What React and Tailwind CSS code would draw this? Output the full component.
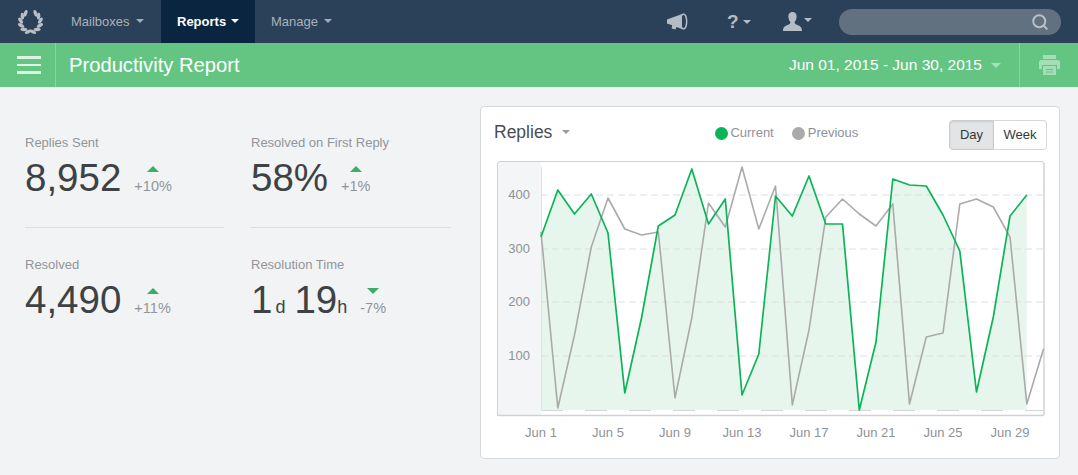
import { Search } from "lucide-react";

const green = [237, 190, 214, 194, 233, 393, 318, 226, 215, 169, 224, 199, 395, 354, 196, 216, 176, 224, 224, 410, 342, 179, 185, 186, 215, 251, 392, 317, 216, 195];
const gray = [232, 408, 335, 247, 198, 229, 235, 232, 398, 318, 203, 227, 167, 229, 186, 405, 330, 217, 199, 214, 226, 204, 404, 337, 333, 204, 199, 207, 237, 404, 349];

const ticks = [
  { label: "400", y: 195 },
  { label: "300", y: 249 },
  { label: "200", y: 302 },
  { label: "100", y: 356 },
];
const days = ["Jun 1", "Jun 5", "Jun 9", "Jun 13", "Jun 17", "Jun 21", "Jun 25", "Jun 29"];

// chart svg starts at page x=497, y=161
const px = (i) => 541 - 497 + i * 16.75;
const py = (y) => y - 161;
const line = (list) => list.map((y, i) => `${px(i).toFixed(1)},${py(y)}`).join(" ");

function Caret({ className }) {
  return <span className={`inline-block w-0 h-0 border-x-[4px] border-x-transparent border-t-[4px] ${className}`} />;
}

function Laurel() {
  // angle from straight down, going up each side
  const angles = [14, 42, 70, 98, 126, 150];
  const leaf = (a, side, i) => (
    <g key={`${side}${i}`} transform={`scale(${side} 1) rotate(${a}) translate(0 10) rotate(${-40})`}>
      <ellipse cx="0" cy="0" rx="3.5" ry="1.7" fill="#b8bfc7" />
    </g>
  );
  return (
    <svg width="27" height="24" viewBox="-13.5 -12 27 24">
      {angles.map((a, i) => leaf(a, 1, i))}
      {angles.map((a, i) => leaf(a, -1, i))}
    </svg>
  );
}

function Megaphone() {
  return (
    <svg width="21" height="18" viewBox="0 0 21 18">
      <path d="M0 6.5 L15 1 L15 16 L9.3 14 L8.6 16.6 L4.6 15.4 L5.2 12.2 L0 10.4Z" fill="#b4bcc5" />
      <ellipse cx="16.5" cy="8.5" rx="3.2" ry="7.6" fill="none" stroke="#b4bcc5" strokeWidth="1.5" />
    </svg>
  );
}

function UserIcon() {
  return (
    <svg width="19" height="19" viewBox="0 0 19 19" fill="#b4bcc5">
      <path d="M9.5 0 C12.5 0 13.8 2.2 13.6 5 C13.4 7.5 12.4 9.2 11.6 10.2 C11.4 11.5 12.5 12.2 14.5 13 C17 14 19 15 19 19 L0 19 C0 15 2 14 4.5 13 C6.5 12.2 7.6 11.5 7.4 10.2 C6.6 9.2 5.6 7.5 5.4 5 C5.2 2.2 6.5 0 9.5 0Z" />
    </svg>
  );
}

function PrinterIcon() {
  return (
    <svg width="21" height="20" viewBox="0 0 21 20" fill="#a3deb7">
      <path d="M4 0 H17 V4 H4Z" />
      <path d="M2 5 H19 C20 5 21 6 21 7 V14 H18 V10 H3 V14 H0 V7 C0 6 1 5 2 5Z" />
      <path fillRule="evenodd" d="M4 11 H17 V20 H4Z M7 14 V15 H14 V14Z M7 16.5 V17.5 H14 V16.5Z" />
    </svg>
  );
}

function Stat({ label, delta, down, children }) {
  return (
    <div className="h-[94px]">
      <div className="text-[13px] leading-[18px] pt-[1px] text-[#919599]">{label}</div>
      <div className="flex items-start mt-[4px]">
        <div className="text-[38.5px] leading-[44px] text-[#3d4245] whitespace-nowrap">{children}</div>
        <div className="ml-[13px] mt-[10px] flex flex-col items-center">
          {down ? (
            <span className="w-0 h-0 mb-[1px] border-x-[6px] border-x-transparent border-t-[6px] border-t-[#3aad68]" />
          ) : (
            <span className="w-0 h-0 mb-[1px] border-x-[6px] border-x-transparent border-b-[6px] border-b-[#3aad68]" />
          )}
          <span className="text-[14.5px] leading-[20px] mt-[3px] text-[#919599]">{delta}</span>
        </div>
      </div>
    </div>
  );
}

function Chart() {
  return (
    <svg width="548" height="292" viewBox="0 0 548 292" className="block" style={{ fontFamily: '"Liberation Sans", sans-serif' }}>
      <rect x="0.5" y="0.5" width="547" height="254" rx="2" fill="#fff" />
      <rect x="1" y="1" width="43" height="253" fill="#f4f5f7" />
      <polygon points={`${px(0)},249 ${line(green)} ${px(29)},249`} fill="#e6f6ed" />
      {ticks.map((t) => (
        <g key={t.label}>
          <line x1="44" x2="547" y1={py(t.y)} y2={py(t.y)} stroke="#dcdedd" strokeWidth="1" strokeDasharray="7 4" />
          <text x="33" y={py(t.y) + 4} textAnchor="end" fontSize="13" fill="#8f9295">{t.label}</text>
        </g>
      ))}
      <line x1="44" x2="547" y1="249.5" y2="249.5" stroke="#d6d8d8" strokeDasharray="22 22" />
      <line x1="44.5" x2="44.5" y1="6" y2="249" stroke="#dfe1e2" />
      <path d="M0.5 254 V2.5 Q0.5 0.5 2.5 0.5 H545 Q547 0.5 547 2.5" fill="none" stroke="#cfd1d2" />
      <path d="M0.5 254 Q0.5 254.5 2.5 254.5 H545 Q547 254.5 547 252.5 V2" fill="none" stroke="#cfd1d2" strokeWidth="1.4" />
      <polyline points={line(gray)} fill="none" stroke="#aaaaaa" strokeWidth="1.6" strokeLinejoin="round" />
      <polyline points={line(green)} fill="none" stroke="#0cb458" strokeWidth="1.7" strokeLinejoin="round" />
      {days.map((d, i) => (
        <text key={d} x={px(i * 4)} y="276" textAnchor="middle" fontSize="13" fill="#8f9295">{d}</text>
      ))}
    </svg>
  );
}

export default function App() {
  return (
    <div className="w-[1078px] h-[475px] overflow-hidden bg-[#f1f3f5] font-['Liberation_Sans',sans-serif]">
      {/* top nav */}
      <div className="h-[43px] bg-[#2b4059] flex items-center text-[13px] text-[#a9b3bd]">
        <div className="w-[55px] pl-[17px] pt-[1px] flex items-center"><Laurel /></div>
        <div className="flex items-center gap-[6px] pl-[16px] pr-[15px] w-[106px] h-full">Mailboxes <Caret className="border-t-[#a3adb8] mb-[2px]" /></div>
        <div className="flex items-center gap-[5px] pl-[16px] w-[94px] h-full bg-[#0a2540] text-white font-bold">Reports <Caret className="border-t-white mb-[2px]" /></div>
        <div className="flex items-center gap-[6px] pl-[16px] h-full">Manage <Caret className="border-t-[#a3adb8] mb-[2px]" /></div>
        <div className="ml-auto flex items-center"><Megaphone /></div>
        <div className="ml-[39px] flex items-center gap-[4px] text-[#b4bcc5] text-[19px] font-bold leading-none w-[26px]">? <Caret className="border-t-[#b4bcc5]" /></div>
        <div className="ml-[30px] flex items-center gap-[2px]"><UserIcon /><Caret className="border-t-[#b4bcc5] mb-[3px]" /></div>
        <div className="ml-[27px] mr-[17px] w-[222px] h-[26px] rounded-full bg-[#62717f] flex items-center justify-end pr-[12px]">
          <Search size={18} strokeWidth={2.6} className="text-[#b9c0c7]" />
        </div>
      </div>

      {/* green bar */}
      <div className="h-[44px] bg-[#64c583] flex items-center text-white">
        <div className="w-[56px] h-full border-r border-[#8bd4a2] flex flex-col justify-center gap-[5px] pl-[17px]">
          <span className="block w-[24px] h-[3px] bg-[#ddf3e4]" />
          <span className="block w-[24px] h-[2px] bg-[#ddf3e4]" />
          <span className="block w-[24px] h-[3px] bg-[#ddf3e4]" />
        </div>
        <div className="ml-[13px] text-[20.2px]">Productivity Report</div>
        <div className="ml-auto text-[15.5px] flex items-center">Jun 01, 2015 - Jun 30, 2015</div>
        <span className="ml-[9px] w-0 h-0 border-x-[5px] border-x-transparent border-t-[5px] border-t-[#a5e0b9]" />
        <div className="ml-[18px] w-[59px] h-full border-l border-[#8bd4a2] flex items-center justify-center">
          <PrinterIcon />
        </div>
      </div>

      {/* content */}
      <div className="flex">
        <div className="w-[480px] pl-[25px] pt-[46px]">
          <div className="grid grid-cols-[199px_200px] gap-x-[27px]">
            <Stat label="Replies Sent" delta="+10%">8,952</Stat>
            <Stat label="Resolved on First Reply" delta="+1%">58%</Stat>
            <div className="col-span-2 grid grid-cols-[199px_200px] gap-x-[27px] mb-[27px]">
              <div className="h-px bg-[#dcdfe1]" />
              <div className="h-px bg-[#dcdfe1]" />
            </div>
            <Stat label="Resolved" delta="+11%">4,490</Stat>
            <Stat label="Resolution Time" delta="-7%" down>
              1<span className="text-[18px] ml-[3px] mr-[9px]">d</span>19<span className="text-[18px]">h</span>
            </Stat>
          </div>
        </div>

        <div className="mt-[19px] w-[580px] h-[353px] bg-white border border-[#d5d9dc] rounded-[4px] relative">
          <div className="h-[54px] flex items-start pl-[13px] pr-[12px]">
            <div className="text-[17.5px] leading-[22px] mt-[14px] text-[#4a4e52] flex items-center gap-[10px]">
              Replies <Caret className="border-t-[#9a9a9a]" />
            </div>
            <div className="ml-[145px] mt-[17px] flex items-center text-[13px] leading-[18px] text-[#8f9295]">
              <span className="w-[13px] h-[13px] rounded-full bg-[#0cb458] mr-[2px]" />Current
              <span className="w-[13px] h-[13px] rounded-full bg-[#aaaaaa] ml-[18px] mr-[3px]" />Previous
            </div>
            <div className="ml-auto mt-[13px] flex h-[30px] text-[13px] text-[#33383c]">
              <div className="w-[45px] flex items-center justify-center bg-[#e3e4e5] border border-[#c9cccd] rounded-l-[4px] shadow-[inset_0_1px_2px_rgba(0,0,0,0.1)]">Day</div>
              <div className="w-[53px] flex items-center justify-center border border-l-0 border-[#d5d8da] rounded-r-[4px]">Week</div>
            </div>
          </div>
          <div className="pl-[16px]"><Chart /></div>
        </div>
      </div>
    </div>
  );
}
